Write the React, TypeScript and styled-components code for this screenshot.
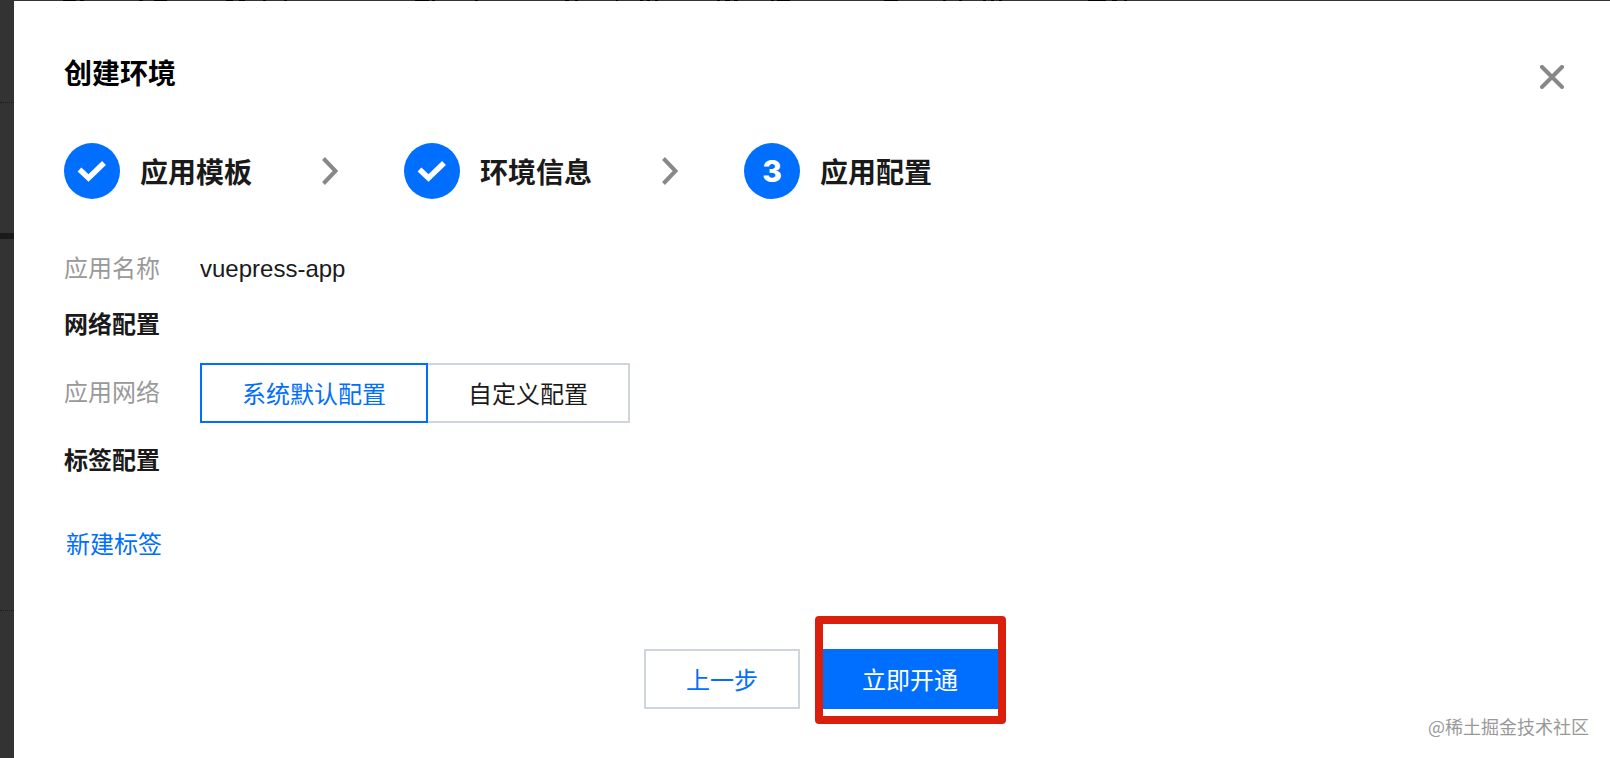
import React from "react";
import styled, { createGlobalStyle } from "styled-components";

const blue = "#006eff";
const fontStack = '"Liberation Sans", "Noto Sans CJK SC", sans-serif';

const GlobalStyle = createGlobalStyle`
  *, *::before, *::after { box-sizing: border-box; }
  body { margin: 0; background: #fff; }
  button { font: inherit; cursor: pointer; }
`;

const Page = styled.div`
  display: grid;
  grid-template-columns: 14px 1fr;
  grid-template-rows: 1px 1fr;
  min-height: 100vh;
  font-family: ${fontStack};
  font-size: 24px;
  line-height: 36px;
  color: #1a1a1a;
`;

// Start and end of each dark stroke of the dimmed page above the dialog.
const strokes = [
  [63, 76], [80, 84], [139, 143], [154, 167], [226, 233], [239, 245], [263, 266], [284, 287],
  [415, 429], [432, 435], [475, 478], [565, 569], [575, 578], [616, 618], [640, 643], [647, 650],
  [655, 658], [717, 720], [725, 730], [734, 738], [771, 774], [777, 790], [884, 898], [943, 946],
  [959, 962], [983, 986], [991, 994], [999, 1002], [1088, 1106], [1112, 1117], [1124, 1127],
];

const strokeGradient = strokes
  .map(([from, to]) => `transparent ${from}px, #000 ${from}px ${to}px, transparent ${to}px`)
  .join(", ");

const TopEdge = styled.div`
  grid-column: 1 / -1;
  background: linear-gradient(to right, ${strokeGradient}) #333;
`;

const Backdrop = styled.div`
  display: flex;
  flex-direction: column;
  background: #333;
`;

const Block = styled.div<{ $height: number }>`
  height: ${(p) => p.$height}px;
`;

const Divider = styled.div`
  height: 6px;
  background: #1a1a1a;
`;

const DottedLine = styled.div`
  border-top: 1px dotted #1a1a1a;
`;

const Dialog = styled.main`
  position: relative;
  display: flex;
  flex-direction: column;
  padding: 0 46px 48px 50px;
  background: #fff;
`;

const Header = styled.header`
  display: flex;
  justify-content: space-between;
  align-items: flex-end;
  padding-top: 54px;
`;

const Title = styled.h1`
  margin: 0;
  font-size: 28px;
  line-height: 40px;
  font-weight: 700;
  color: #000;
`;

const CloseButton = styled.button`
  display: flex;
  padding: 0 0 6px;
  border: 0;
  background: none;
  color: #888;
`;

const Steps = styled.ol`
  display: flex;
  align-items: center;
  margin: 48px 0 0;
  padding: 0;
  list-style: none;
`;

const Step = styled.li`
  display: flex;
  align-items: center;
  width: 340px;
  font-size: 28px;
  line-height: 40px;
  font-weight: 700;
`;

const StepMark = styled.span`
  display: flex;
  align-items: center;
  justify-content: center;
  width: 56px;
  height: 56px;
  margin-right: 20px;
  border-radius: 50%;
  background: ${blue};
  color: #fff;
  font-family: Inter, sans-serif;
  font-size: 30px;
  font-weight: 800;
`;

const StepName = styled.span`
  padding-top: 6px;
`;

const Arrow = styled.svg`
  margin-left: 70px;
`;

const Form = styled.form`
  display: flex;
  flex-direction: column;
  flex: 1;
  padding-top: 40px;
`;

const Row = styled.div<{ $tall?: boolean }>`
  display: flex;
  align-items: center;
  min-height: ${(p) => (p.$tall ? 84 : 60)}px;
`;

const Label = styled.span`
  width: 136px;
  color: #999;
`;

const SectionTitle = styled.h2`
  margin: 8px 0;
  font-size: 24px;
  line-height: 36px;
  font-weight: 700;
`;

const Segment = styled.button<{ $active?: boolean }>`
  height: 60px;
  padding: 4px 40px 0;
  border: 2px solid ${(p) => (p.$active ? blue : "#cfd5de")};
  border-left-width: ${(p) => (p.$active ? 2 : 0)}px;
  background: #fff;
  color: ${(p) => (p.$active ? blue : "#1a1a1a")};
`;

const TagLink = styled.a`
  align-self: flex-start;
  margin: 40px 2px 0;
  color: ${blue};
  text-decoration: none;
`;

const Footer = styled.footer`
  display: flex;
  justify-content: center;
  gap: 20px;
  padding: 86px 0 0 16px;
`;

const ActionButton = styled.button<{ $primary?: boolean }>`
  height: 60px;
  padding: 4px 40px 0;
  border: 2px solid ${(p) => (p.$primary ? blue : "#cfd5de")};
  background: ${(p) => (p.$primary ? blue : "#fff")};
  color: ${(p) => (p.$primary ? "#fff" : blue)};
`;

const Highlighted = styled.div`
  position: relative;
`;

const Highlight = styled.span`
  position: absolute;
  inset: -33px -6px -15px -5px;
  border: 8px solid #db1f0d;
  border-radius: 4px;
  pointer-events: none;
`;

const Watermark = styled.span`
  position: absolute;
  right: 21px;
  bottom: 20px;
  font-family: "Noto Sans CJK SC", sans-serif;
  font-size: 18px;
  line-height: 24px;
  color: #999;
`;

const Check = () => (
  <svg width="30" height="24" viewBox="0 0 30 24" fill="none" aria-hidden="true">
    <path d="M2.5 10.5 L11.5 19 L27 4" stroke="#fff" strokeWidth="5.5" />
  </svg>
);

const Chevron = () => (
  <Arrow width="16" height="28" viewBox="0 0 16 28" fill="none" aria-hidden="true">
    <path d="M1.5 1.5 L13.5 14 L1.5 26.5" stroke="#888" strokeWidth="4" />
  </Arrow>
);

export default function App() {
  return (
    <Page>
      <GlobalStyle />
      <TopEdge />
      <Backdrop>
        <Block $height={101} />
        <DottedLine />
        <Block $height={130} />
        <Divider />
        <Block $height={371} />
        <DottedLine />
      </Backdrop>
      <Dialog>
        <Header>
          <Title>创建环境</Title>
          <CloseButton type="button" aria-label="关闭">
            <svg width="24" height="24" viewBox="0 0 24 24" fill="none" aria-hidden="true">
              <path d="M2 2 L22 22 M22 2 L2 22" stroke="currentColor" strokeWidth="4" strokeLinecap="round" />
            </svg>
          </CloseButton>
        </Header>
        <Steps>
          <Step><StepMark><Check /></StepMark><StepName>应用模板</StepName><Chevron /></Step>
          <Step><StepMark><Check /></StepMark><StepName>环境信息</StepName><Chevron /></Step>
          <Step aria-current="step"><StepMark>3</StepMark><StepName>应用配置</StepName></Step>
        </Steps>
        <Form onSubmit={(e) => e.preventDefault()}>
          <Row><Label>应用名称</Label><span>vuepress-app</span></Row>
          <SectionTitle>网络配置</SectionTitle>
          <Row $tall role="group" aria-labelledby="network">
            <Label id="network">应用网络</Label>
            <Segment type="button" $active aria-pressed="true">系统默认配置</Segment>
            <Segment type="button" aria-pressed="false">自定义配置</Segment>
          </Row>
          <SectionTitle>标签配置</SectionTitle>
          <TagLink href="#new-tag">新建标签</TagLink>
          <Footer>
            <ActionButton type="button">上一步</ActionButton>
            <Highlighted>
              <ActionButton type="submit" $primary>立即开通</ActionButton>
              <Highlight />
            </Highlighted>
          </Footer>
        </Form>
        <Watermark>@稀土掘金技术社区</Watermark>
      </Dialog>
    </Page>
  );
}
